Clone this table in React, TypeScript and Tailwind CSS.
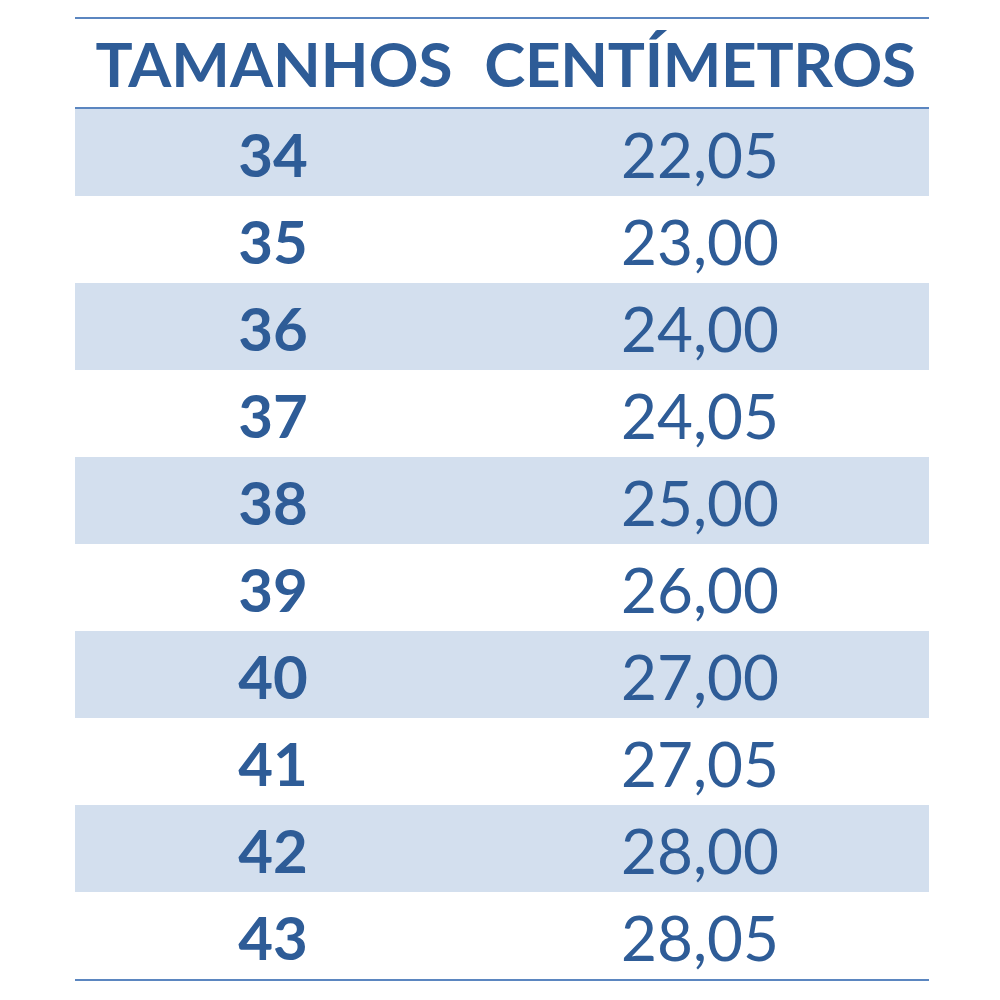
const ROWS: [string, string][] = [
  ["34", "22,05"],
  ["35", "23,00"],
  ["36", "24,00"],
  ["37", "24,05"],
  ["38", "25,00"],
  ["39", "26,00"],
  ["40", "27,00"],
  ["41", "27,05"],
  ["42", "28,00"],
  ["43", "28,05"],
];

export default function App() {
  return (
    <div
      className="w-[1000px] h-[1000px] bg-white pt-[17px] pl-[75px] pr-[71px] text-[#2e5c97]"
      style={{ fontFamily: "Lato, 'Open Sans', sans-serif" }}
    >
      <div className="border-t-2 border-b-2 border-[#5b86c0]">
        {/* Header */}
        <div className="grid grid-cols-[396px_1fr] h-[90px] items-center border-b-2 border-[#5b86c0] text-[62px] font-bold leading-none">
          <div className="text-center pl-[2px]">TAMANHOS</div>
          <div className="text-center tracking-[-0.3px]">CENTÍMETROS</div>
        </div>

        {/* Rows */}
        {ROWS.map(([size, cm], i) => (
          <div
            key={size}
            className={
              "grid grid-cols-[396px_1fr] h-[87px] items-center leading-none " +
              (i % 2 === 0 ? "bg-[#d3dfee]" : "bg-white")
            }
          >
            <div className="text-center text-[60px] font-bold pt-[2px]">{size}</div>
            <div className="text-center text-[62px] font-normal pt-[2px]">{cm}</div>
          </div>
        ))}
      </div>
    </div>
  );
}
